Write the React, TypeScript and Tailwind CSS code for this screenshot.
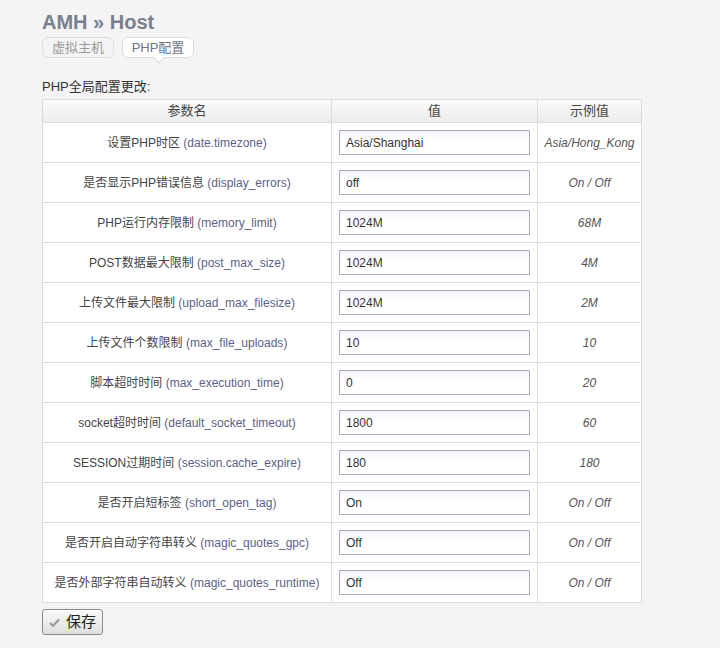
import React from "react";

const rows: [string, string, string, string][] = [
  ["设置PHP时区", "date.timezone", "Asia/Shanghai", "Asia/Hong_Kong"],
  ["是否显示PHP错误信息", "display_errors", "off", "On / Off"],
  ["PHP运行内存限制", "memory_limit", "1024M", "68M"],
  ["POST数据最大限制", "post_max_size", "1024M", "4M"],
  ["上传文件最大限制", "upload_max_filesize", "1024M", "2M"],
  ["上传文件个数限制", "max_file_uploads", "10", "10"],
  ["脚本超时时间", "max_execution_time", "0", "20"],
  ["socket超时时间", "default_socket_timeout", "1800", "60"],
  ["SESSION过期时间", "session.cache_expire", "180", "180"],
  ["是否开启短标签", "short_open_tag", "On", "On / Off"],
  ["是否开启自动字符串转义", "magic_quotes_gpc", "Off", "On / Off"],
  ["是否外部字符串自动转义", "magic_quotes_runtime", "Off", "On / Off"],
];

export default function App() {
  return (
    <div
      className="min-h-[648px] w-[720px] bg-[#f4f4f4] text-[#444]"
      style={{ fontFamily: '"Liberation Sans", Arial, "Noto Sans CJK SC", sans-serif' }}
    >
      <div className="pl-[42px] pt-[9px]">
        <h1 className="text-[20px] font-bold leading-[26px] text-[#7a7f90]">AMH » Host</h1>
        <div className="mt-[2px] flex gap-[8px]">
          <div className="flex h-[21px] w-[72px] items-center justify-center rounded-[6px] border border-[#dcdcdc] bg-[#f4f4f4] text-[13px] text-[#999]">
            虚拟主机
          </div>
          <div className="relative flex h-[21px] w-[72px] items-center justify-center rounded-[6px] border border-[#dcdcdc] bg-white text-[13px] text-[#6b7588]">
            PHP配置
            <div className="absolute bottom-[-5px] left-[32px] h-[8px] w-[8px] rotate-45 border-b border-r border-[#dcdcdc] bg-white" />
          </div>
        </div>
        <div className="mt-[21px] text-[13px] leading-[16px] text-[#333]">PHP全局配置更改:</div>
        <table className="mt-[4px] w-[600px] border-collapse border border-[#dcdcdc] text-[12px]">
          <thead>
            <tr className="h-[23px] bg-gradient-to-b from-[#fafafa] to-[#ececec] text-[13px] font-normal text-[#444]">
              <th className="w-[289px] border border-[#dcdcdc] font-normal">参数名</th>
              <th className="w-[206px] border border-[#dcdcdc] font-normal">值</th>
              <th className="border border-[#dcdcdc] font-normal">示例值</th>
            </tr>
          </thead>
          <tbody>
            {rows.map(([cn, key, val, ex]) => (
              <tr key={key} className="h-[40px] bg-white">
                <td className="border border-[#dcdcdc] text-center text-[#444]">
                  {cn} <span className="text-[#5c5f87]">({key})</span>
                </td>
                <td className="border border-[#dcdcdc] px-[7px]">
                  <input
                    defaultValue={val}
                    className="h-[25px] w-[191px] border border-[#a6b0c3] bg-gradient-to-b from-[#f4f4f4] to-white to-[40%] px-[6px] text-[12px] text-[#333] outline-none"
                  />
                </td>
                <td className="border border-[#dcdcdc] text-center italic text-[#555]">{ex}</td>
              </tr>
            ))}
          </tbody>
        </table>
        <button className="mt-[6px] flex h-[26px] w-[61px] items-center justify-center gap-[6px] rounded-[3px] border border-[#8a8a8a] bg-gradient-to-b from-[#fafafa] to-[#dedede] text-[15px] font-normal text-[#222] shadow-[inset_0_1px_0_#fff]">
          <svg width="11" height="9" viewBox="0 0 11 9">
            <path d="M1 5 L4 7.8 L10 1.5" fill="none" stroke="#9a9a9a" strokeWidth="2.2" />
          </svg>
          <span className="font-normal">保存</span>
        </button>
      </div>
    </div>
  );
}
